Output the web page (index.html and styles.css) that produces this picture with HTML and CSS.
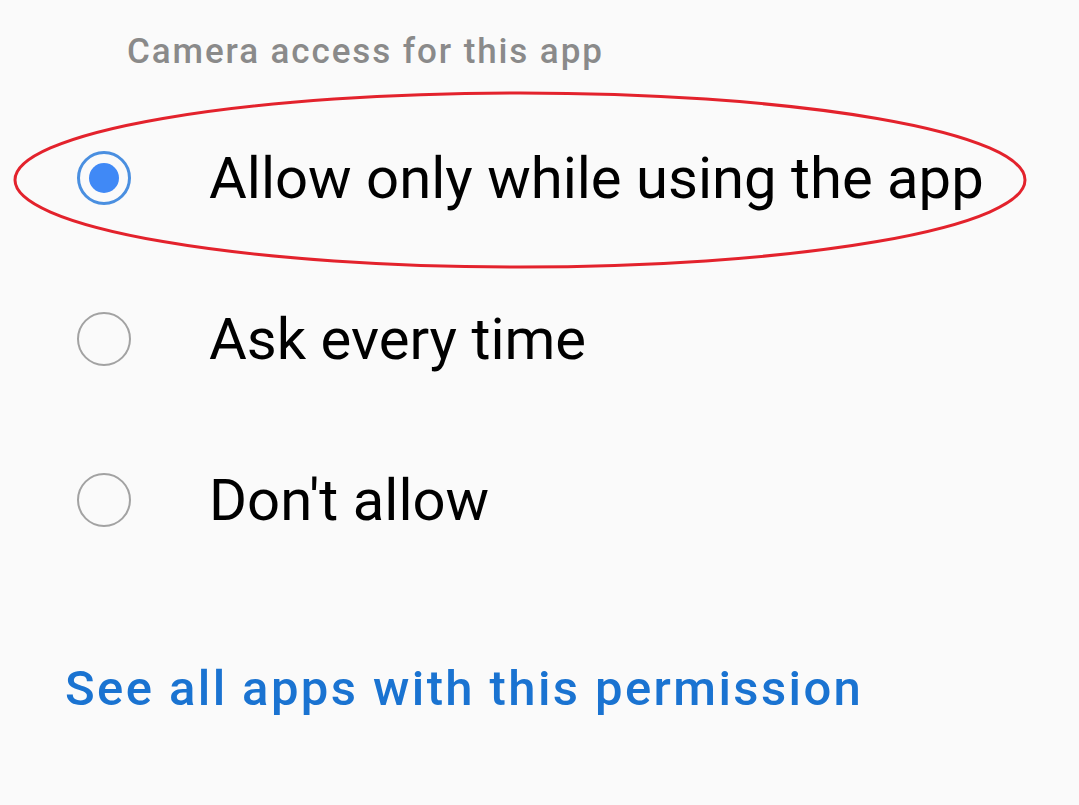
FILE: index.html
```html
<!DOCTYPE html>
<html>
<head>
<meta charset="utf-8">
<link rel="stylesheet" href="styles.css">
</head>
<body>
<div class="screen">
  <div class="section-title">Camera access for this app</div>
  <div class="options">
    <div class="option selected">
      <span class="radio checked"><span class="dot"></span></span>
      <span class="label">Allow only while using the app</span>
      <svg class="highlight" viewBox="0 0 1016 180" width="1016" height="180"><ellipse cx="508" cy="90" rx="505" ry="87" fill="none" stroke="#e3222c" stroke-width="3"/></svg>
    </div>
    <div class="option">
      <span class="radio"></span>
      <span class="label">Ask every time</span>
    </div>
    <div class="option">
      <span class="radio"></span>
      <span class="label">Don't allow</span>
    </div>
  </div>
  <div class="link">See all apps with this permission</div>
</div>
</body>
</html>
```
FILE: styles.css
```css
html, body {
  margin: 0;
  padding: 0;
  background: #fafafa;
}
.screen {
  width: 1079px;
  height: 805px;
  font-family: Roboto, "Noto Sans", sans-serif;
  display: flex;
  flex-direction: column;
  overflow: hidden;
}
.section-title {
  padding: 30px 0 0 127px;
  font-size: 35px;
  font-weight: 500;
  letter-spacing: 1.9px;
  color: #8a8a8a;
  line-height: 44px;
}
.options {
  display: flex;
  flex-direction: column;
  padding-top: 23px;
}
.option {
  position: relative;
  display: flex;
  align-items: center;
  height: 161px;
  padding-left: 77px;
}
.radio {
  width: 54px;
  height: 54px;
  border: 2.5px solid #a2a2a2;
  border-radius: 50%;
  box-sizing: border-box;
  display: flex;
  align-items: center;
  justify-content: center;
  flex: none;
}
.radio.checked {
  border: 3px solid #4a8fe0;
}
.dot {
  width: 30px;
  height: 30px;
  border-radius: 50%;
  background: #4089f6;
}
.label {
  margin-left: 78px;
  font-size: 58px;
  color: #000;
  line-height: 66px;
}
.highlight {
  position: absolute;
  left: 12px;
  top: 3px;
  height: 180px;
  margin-top: -10px;
}
.link {
  margin-top: 82px;
  padding-left: 65px;
  font-size: 49px;
  font-weight: 500;
  letter-spacing: 2.4px;
  line-height: 54px;
  color: #1a73d1;
}
```
